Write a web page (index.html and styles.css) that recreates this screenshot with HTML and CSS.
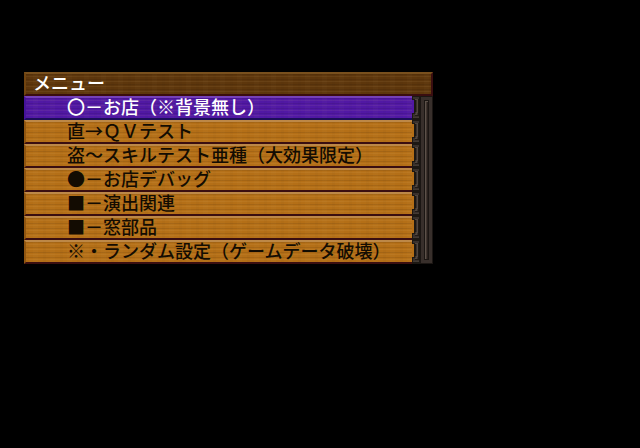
FILE: index.html
```
<!DOCTYPE html>
<html lang="ja">
<head>
    <meta charset="UTF-8">
    <title>メニュー</title>
    <link rel="stylesheet" href="styles.css">
</head>
<body>
    <svg class="defs" aria-hidden="true">
        <symbol id="clasp" viewBox="0 0 8 24">
            <path fill="#1c1813" d="M0 0H8V24H0V17H2V4H0Z"/>
            <path fill="#39312c" d="M1 1H7V22H1V18H3V16H4V4H3V3H1Z"/>
            <path fill="#51473f" d="M3 3H6V17H5V19H3V18H4V16H5V4H3Z"/>
            <path fill="#211b17" d="M6 3H7V20H3V19H6Z"/>
            <path fill="#433a34" d="M1 21H7V22H1Z"/>
        </symbol>
    </svg>

    <main class="window">
        <h1 class="title">メニュー</h1>
        <div class="content">
            <ul class="menu">
                <li class="current"><button type="button" class="item selected">〇－お店（※背景無し）</button><svg class="clasp"><use href="#clasp"/></svg></li>
                <li><button type="button" class="item">直→ＱＶテスト</button><svg class="clasp"><use href="#clasp"/></svg></li>
                <li><button type="button" class="item">盗～スキルテスト亜種（大効果限定）</button><svg class="clasp"><use href="#clasp"/></svg></li>
                <li><button type="button" class="item">●－お店デバッグ</button><svg class="clasp"><use href="#clasp"/></svg></li>
                <li><button type="button" class="item">■－演出関連</button><svg class="clasp"><use href="#clasp"/></svg></li>
                <li><button type="button" class="item">■－窓部品</button><svg class="clasp"><use href="#clasp"/></svg></li>
                <li><button type="button" class="item">※・ランダム設定（ゲームデータ破壊）</button><svg class="clasp"><use href="#clasp"/></svg></li>
            </ul>
            <div class="rail"><div class="groove"></div></div>
        </div>
    </main>
</body>
</html>
```

FILE: styles.css
```
body {
    margin: 0;
    padding: 72px 24px;
    background: #000;
    font-family: "Noto Sans CJK JP", sans-serif;
    font-size: 18px;
    line-height: 16px;
}

.defs {
    position: absolute;
    width: 0;
    height: 0;
}

.window {
    max-width: 409px;
}

/* 木目 */
.title,
.item {
    box-sizing: border-box;
    height: 24px;
    margin: 0;
    border-style: solid;
    border-width: 2px 0 2px 2px;
    background-image:
        repeating-linear-gradient(90deg, rgba(0, 0, 0, 0.02) 0 3px, transparent 3px 7px, rgba(255, 220, 160, 0.02) 7px 12px, transparent 12px 17px),
        repeating-linear-gradient(rgba(0, 0, 0, 0.09) 0 1px, transparent 1px 2px, rgba(255, 210, 140, 0.07) 2px 3px, transparent 3px 5px);
    font-size: 18px;
    font-weight: 500;
    line-height: 16px;
    white-space: nowrap;
}

.title {
    padding: 0 7px;
    border-color: #79501d #3a0e10 #3a0e10 #71440f;
    border-right-width: 2px;
    background-color: #5d360c;
    color: #fff;
}

.content {
    display: flex;
}

.menu {
    flex: 1;
    min-width: 0;
    margin: 0;
    padding: 0;
    list-style: none;
}

.menu li {
    display: flex;
    background: #b46f17;
}

.menu .current {
    background: #5118a4;
}

.item {
    flex: 1;
    min-width: 0;
    padding: 0 0 4px 41px;
    border-color: #bd8847 #3a0e10 #3a0e10 #8f5510;
    background-color: #b46f17;
    color: #130c02;
    font-family: inherit;
    text-align: left;
    cursor: pointer;
}

.item.selected {
    border-color: #7540b8 #1c0e58 #1c0e58 #45129a;
    background-color: #5118a4;
    color: #fff;
}

.clasp {
    display: block;
    width: 8px;
    height: 24px;
    shape-rendering: crispEdges;
}

/* 右側のスクロール枠 */
.rail {
    box-sizing: border-box;
    width: 13px;
    padding: 3px;
    border: 1px solid #1b1613;
    background: #382f2b;
}

.groove {
    box-sizing: border-box;
    height: 100%;
    border: 1px solid #1b1613;
    background: #40352f;
    box-shadow: inset 1px 1px #5c5149, inset -1px 0 #28201d;
}
```
